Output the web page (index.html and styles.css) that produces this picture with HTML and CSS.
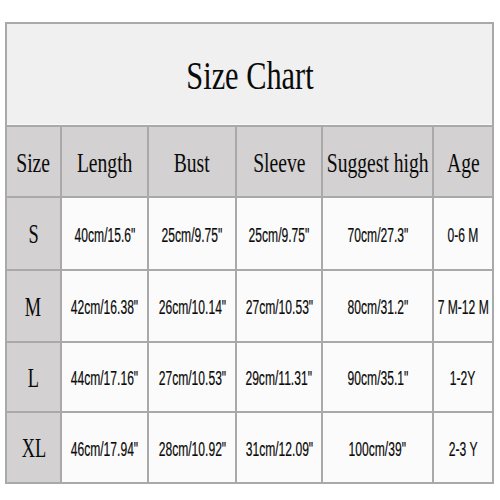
FILE: index.html
```html
<!DOCTYPE html>
<html>
<head>
<meta charset="utf-8">
<link rel="stylesheet" href="styles.css">
</head>
<body>
<div class="chart">
  <div class="title"><span class="t">Size Chart</span></div>

  <div class="cell head"><span class="h">Size</span></div>
  <div class="cell head"><span class="h">Length</span></div>
  <div class="cell head"><span class="h">Bust</span></div>
  <div class="cell head"><span class="h">Sleeve</span></div>
  <div class="cell head"><span class="h">Suggest high</span></div>
  <div class="cell head"><span class="h">Age</span></div>

  <div class="cell side"><span class="s">S</span></div>
  <div class="cell data"><span class="d">40cm/15.6"</span></div>
  <div class="cell data"><span class="d">25cm/9.75"</span></div>
  <div class="cell data"><span class="d">25cm/9.75"</span></div>
  <div class="cell data"><span class="d">70cm/27.3"</span></div>
  <div class="cell data"><span class="d">0-6 M</span></div>

  <div class="cell side"><span class="s">M</span></div>
  <div class="cell data"><span class="d">42cm/16.38"</span></div>
  <div class="cell data"><span class="d">26cm/10.14"</span></div>
  <div class="cell data"><span class="d">27cm/10.53"</span></div>
  <div class="cell data"><span class="d">80cm/31.2"</span></div>
  <div class="cell data"><span class="d">7 M-12 M</span></div>

  <div class="cell side"><span class="s">L</span></div>
  <div class="cell data"><span class="d">44cm/17.16"</span></div>
  <div class="cell data"><span class="d">27cm/10.53"</span></div>
  <div class="cell data"><span class="d">29cm/11.31"</span></div>
  <div class="cell data"><span class="d">90cm/35.1"</span></div>
  <div class="cell data"><span class="d">1-2Y</span></div>

  <div class="cell side"><span class="s">XL</span></div>
  <div class="cell data"><span class="d">46cm/17.94"</span></div>
  <div class="cell data"><span class="d">28cm/10.92"</span></div>
  <div class="cell data"><span class="d">31cm/12.09"</span></div>
  <div class="cell data"><span class="d">100cm/39"</span></div>
  <div class="cell data"><span class="d">2-3 Y</span></div>
</div>
</body>
</html>
```
FILE: styles.css
```css
html, body {
  margin: 0;
  padding: 0;
  background: #ffffff;
}

.chart {
  margin: 22px 0 0 5px;
  width: 485px;
  display: grid;
  grid-template-columns: 53px 85px 86px 84px 109px 58px;
  grid-template-rows: 101px 69px 71px 70px 68px 69px;
  gap: 2px;
  background: #a9a9a9;
  border: 2px solid #a9a9a9;
}

.title {
  grid-column: 1 / -1;
  background: #f0f0f0;
  display: flex;
  align-items: center;
  justify-content: center;
  border-bottom: 1px solid #fafafa;
}

.cell {
  display: flex;
  align-items: center;
  justify-content: center;
  overflow: visible;
  white-space: nowrap;
}

.head, .side {
  background: #d3d1d1;
}

.data {
  background: #fbfbfb;
}

.t, .h, .s, .d {
  display: inline-block;
  color: #0a0a0a;
}

.t {
  font-family: "Liberation Serif", serif;
  font-size: 41px;
  transform: scaleX(0.74);
  margin-top: 2px;
}

.h {
  font-family: "Liberation Serif", serif;
  font-size: 28px;
  transform: scaleX(0.7);
  margin-top: 2px;
}

.s {
  font-family: "Liberation Serif", serif;
  font-size: 27px;
  transform: scaleX(0.68);
  margin-top: 2px;
}

.d {
  font-family: "Liberation Sans", sans-serif;
  font-size: 19.5px;
  transform: scaleX(0.62);
  margin-top: 3px;
  -webkit-text-stroke: 0.2px #0a0a0a;
}
```
